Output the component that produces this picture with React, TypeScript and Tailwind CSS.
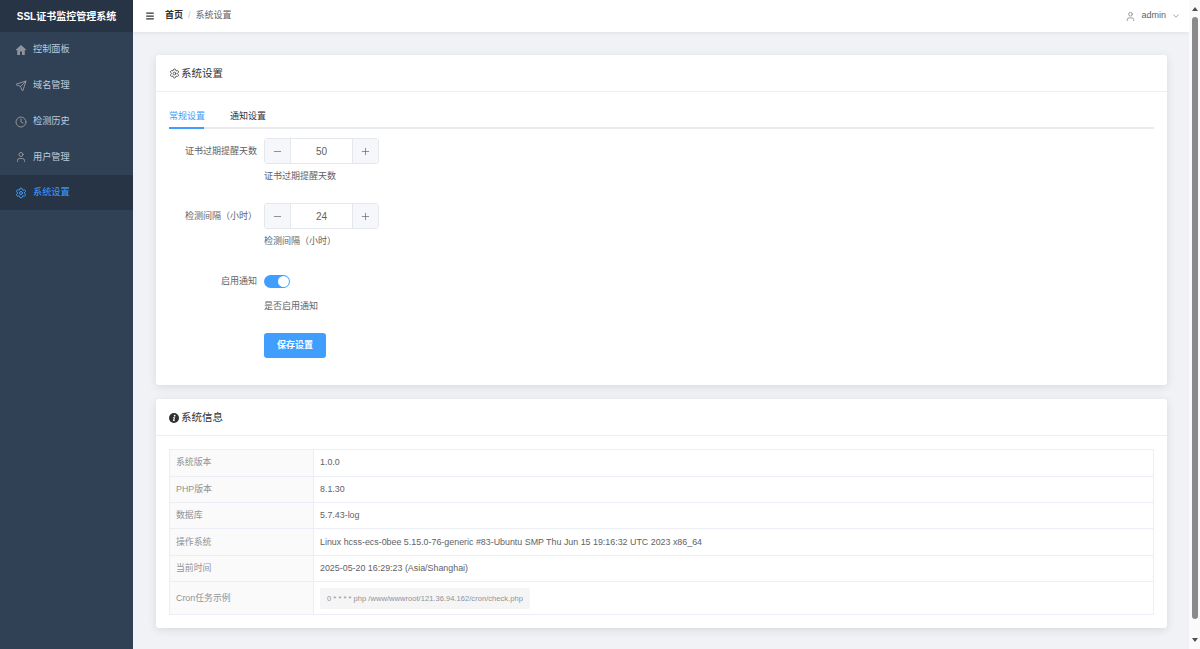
import { Send, Clock, User, Settings, ChevronDown, Minus, Plus, Menu } from "lucide-react";

const font = "font-['Liberation_Sans','Noto_Sans_CJK_SC',sans-serif]";

function HomeFilled({ size, className }: { size: number; className?: string }) {
  return (
    <svg width={size} height={size} viewBox="0 0 24 24" fill="currentColor" className={className}>
      <path d="M12 2 1.5 11.5 3 13l1.5-1.3V22h5.5v-7h4v7h5.5V11.7L21 13l1.5-1.5Z" />
    </svg>
  );
}

function InfoFilled({ size }: { size: number }) {
  return (
    <svg width={size} height={size} viewBox="0 0 24 24">
      <circle cx="12" cy="12" r="12" fill="#303133" />
      <circle cx="13.6" cy="6.4" r="2.1" fill="#fff" />
      <path d="M10 10.4h4.6l-1.9 7h1.6l-.4 1.6H9.4l1.9-7H9.6Z" fill="#fff" />
    </svg>
  );
}

const navItems = [
  { name: "控制面板", icon: HomeFilled },
  { name: "域名管理", icon: Send },
  { name: "检测历史", icon: Clock },
  { name: "用户管理", icon: User },
  { name: "系统设置", icon: Settings, active: true },
];

const infoRows = [
  { label: "系统版本", value: "1.0.0" },
  { label: "PHP版本", value: "8.1.30" },
  { label: "数据库", value: "5.7.43-log" },
  { label: "操作系统", value: "Linux hcss-ecs-0bee 5.15.0-76-generic #83-Ubuntu SMP Thu Jun 15 19:16:32 UTC 2023 x86_64" },
  { label: "当前时间", value: "2025-05-20 16:29:23 (Asia/Shanghai)" },
];

function Stepper({ value }: { value: string }) {
  return (
    <div className="flex h-[26px] w-[115px] rounded-[3px] border border-[#e4e7ed] text-[#606266]">
      <div className="flex w-[26px] items-center justify-center border-r border-[#e4e7ed] bg-[#f5f7fa]">
        <Minus size={11} strokeWidth={1.5} />
      </div>
      <div className="flex flex-1 items-center justify-center text-[10px]">{value}</div>
      <div className="flex w-[26px] items-center justify-center border-l border-[#e4e7ed] bg-[#f5f7fa]">
        <Plus size={11} strokeWidth={1.5} />
      </div>
    </div>
  );
}

function FormRow({ label, hint, children }: { label: string; hint: string; children: React.ReactNode }) {
  return (
    <div className="flex">
      <div className="w-[95px] pr-[7px] pt-[6px] text-right text-[9px] leading-[14px] text-[#606266] whitespace-nowrap">{label}</div>
      <div>
        {children}
        <div className="mt-[5px] text-[9px] leading-[14px] text-[#606266]">{hint}</div>
      </div>
    </div>
  );
}

function Sidebar() {
  return (
    <aside className="flex w-[133px] shrink-0 flex-col bg-[#304156]">
      <div className="flex h-[32px] items-center justify-center bg-[#263445] text-[10px] font-bold text-white">
        SSL证书监控管理系统
      </div>
      <nav className="flex flex-col">
        {navItems.map((item) => (
          <div
            key={item.name}
            className={`flex h-[35.7px] items-center gap-[6px] pl-[15px] pt-[1px] text-[9.2px] ${
              item.active ? "bg-[#263445] text-[#409eff]" : "text-[#bfcbd9]"
            }`}
          >
            <item.icon size={12} className={item.active ? "text-[#409eff]" : "text-[#909399]"} />
            {item.name}
          </div>
        ))}
      </nav>
    </aside>
  );
}

function Topbar() {
  return (
    <header className="flex h-[32px] shrink-0 items-center justify-between bg-white pl-[12px] pr-[8px] shadow-[0_1px_4px_rgba(0,21,41,0.08)]">
      <div className="flex items-center text-[9px]">
        <Menu size={10} strokeWidth={3} className="text-[#303133]" />
        <span className="ml-[10px] font-bold text-[#303133]">首页</span>
        <span className="mx-[5px] text-[#c0c4cc]">/</span>
        <span className="text-[#606266]">系统设置</span>
      </div>
      <div className="flex items-center text-[9px] text-[#606266]">
        <User size={11} className="text-[#909399]" />
        <span className="ml-[5px]">admin</span>
        <ChevronDown size={10} className="ml-[5px] text-[#909399]" />
      </div>
    </header>
  );
}

function SettingsCard() {
  return (
    <section className="rounded-[3px] bg-white shadow-[0_2px_10px_rgba(0,0,0,0.1)]">
      <div className="flex h-[37px] items-center gap-[1px] border-b border-[#ebeef5] px-[13px] pt-[1px] text-[10.5px] text-[#303133]">
        <Settings size={11} strokeWidth={1.6} />
        系统设置
      </div>
      <div className="px-[13px] pb-[27px] pt-[11px]">
        <div className="flex h-[26px] whitespace-nowrap border-b-2 border-[#e9ebef] text-[9px] leading-[27px] text-[#303133]">
          <div className="-mb-[2px] w-[35px] border-b-2 border-[#409eff] text-[#409eff]">常规设置</div>
          <div className="ml-[26px]">通知设置</div>
        </div>
        <div className="mt-[9px] flex flex-col gap-[20px]">
          <FormRow label="证书过期提醒天数" hint="证书过期提醒天数">
            <Stepper value="50" />
          </FormRow>
          <FormRow label="检测间隔（小时）" hint="检测间隔（小时）">
            <Stepper value="24" />
          </FormRow>
          <FormRow label="启用通知" hint="是否启用通知">
            <div className="flex h-[26px] items-center">
              <div className="flex h-[13px] w-[26px] items-center justify-end rounded-full bg-[#409eff] pr-[1px]">
                <div className="h-[11px] w-[11px] rounded-full bg-white" />
              </div>
            </div>
          </FormRow>
          <div className="-mt-[2px] pl-[95px]">
            <button className="h-[25px] w-[62px] rounded-[3px] bg-[#409eff] text-[9px] font-bold text-white">保存设置</button>
          </div>
        </div>
      </div>
    </section>
  );
}

function InfoCard() {
  return (
    <section className="rounded-[3px] bg-white shadow-[0_2px_10px_rgba(0,0,0,0.1)]">
      <div className="flex h-[37px] items-center gap-[2px] border-b border-[#ebeef5] px-[13px] pt-[1px] text-[10.5px] text-[#303133]">
        <InfoFilled size={10} />
        系统信息
      </div>
      <div className="p-[13px]">
        <div className="border border-[#ebeef5] text-[8.9px] leading-[13px]">
          {infoRows.map((row) => (
            <div key={row.label} className="flex h-[26.4px] border-b border-[#ebeef5]">
              <div className="flex w-[144px] items-center border-r border-[#ebeef5] bg-[#fafafa] px-[6px] text-[#909399]">{row.label}</div>
              <div className="flex items-center px-[6px] text-[#606266]">{row.value}</div>
            </div>
          ))}
          <div className="flex h-[32px]">
            <div className="flex w-[144px] items-center border-r border-[#ebeef5] bg-[#fafafa] px-[6px] text-[#909399]">Cron任务示例</div>
            <div className="flex items-center px-[6px]">
              <span className="rounded-[2px] bg-[#f5f5f5] px-[7px] py-[5px] text-[7.6px] leading-[11px] text-[#909399]">0 * * * * php /www/wwwroot/121.36.94.162/cron/check.php</span>
            </div>
          </div>
        </div>
      </div>
    </section>
  );
}

export default function App() {
  return (
    <div className={`flex h-[649px] w-[1200px] overflow-hidden ${font}`}>
      <Sidebar />
      <div className="flex min-w-0 flex-1 flex-col bg-[#f0f2f5]">
        <Topbar />
        <main className="flex flex-col gap-[14px] pl-[23px] pr-[22px] pt-[23px]">
          <SettingsCard />
          <InfoCard />
        </main>
      </div>
      <div className="flex w-[11px] shrink-0 flex-col items-center bg-[#fafafa] py-[7px]">
        <div className="h-0 w-0 border-x-[3px] border-b-[4px] border-x-transparent border-b-[#505050]" />
        <div className="mt-[6px] h-[602px] w-[6px] rounded-[3px] bg-[#8a8a8a]" />
        <div className="mt-auto h-0 w-0 border-x-[3px] border-t-[4px] border-x-transparent border-t-[#505050]" />
      </div>
    </div>
  );
}
